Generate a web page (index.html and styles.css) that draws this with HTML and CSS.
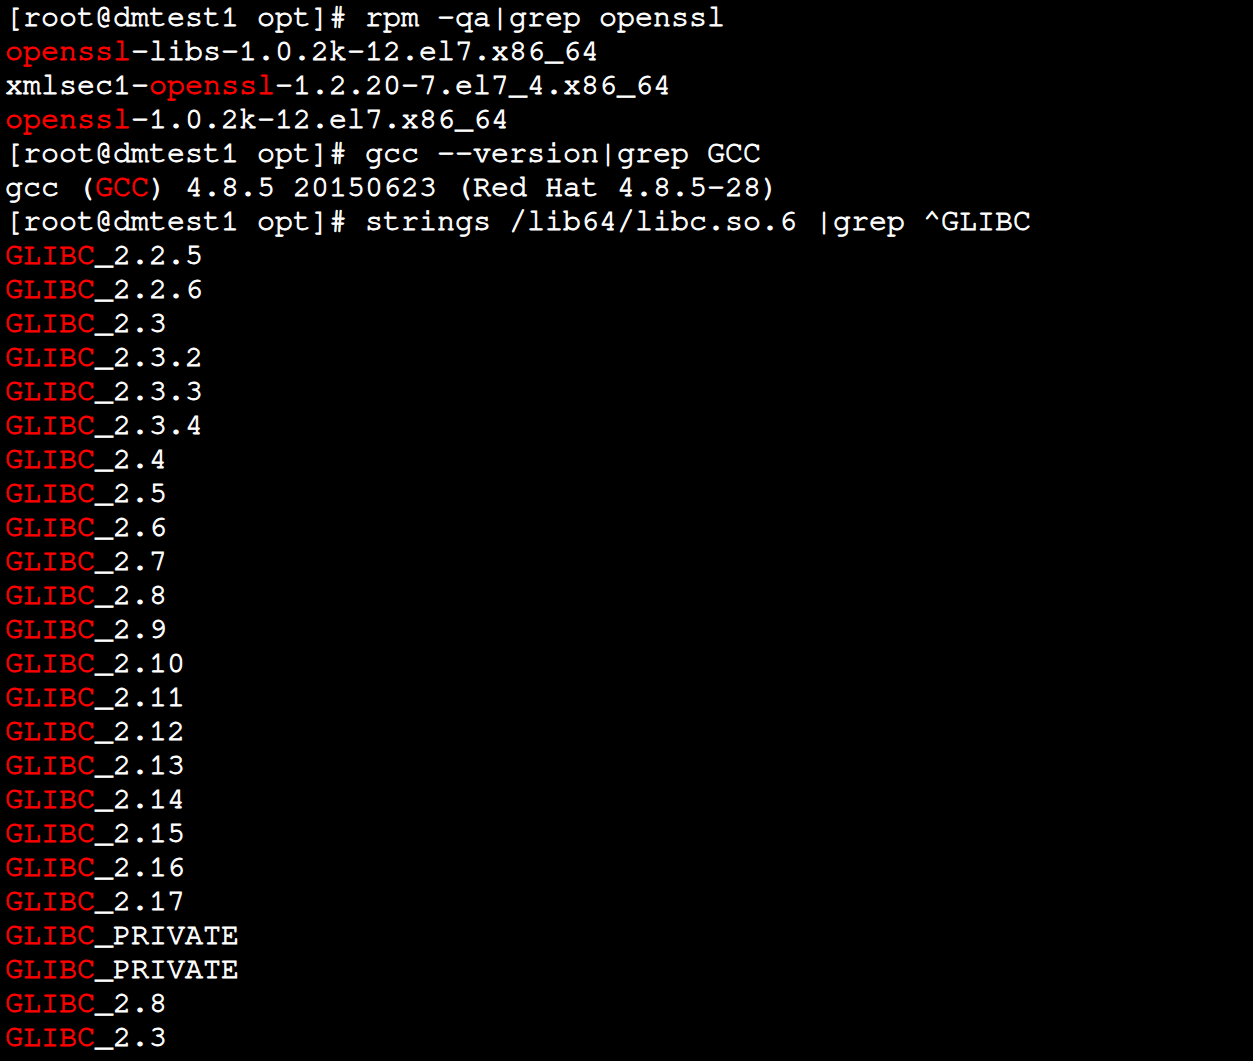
FILE: index.html
```html
<!DOCTYPE html>
<html>
<head>
<meta charset="utf-8">
<link rel="stylesheet" href="styles.css">
</head>
<body>
<pre class="term">[root@dmtest1 opt]# rpm -qa|grep openssl
<span class="hl">openssl</span>-libs-1.0.2k-12.el7.x86_64
xmlsec1-<span class="hl">openssl</span>-1.2.20-7.el7_4.x86_64
<span class="hl">openssl</span>-1.0.2k-12.el7.x86_64
[root@dmtest1 opt]# gcc --version|grep GCC
gcc (<span class="hl">GCC</span>) 4.8.5 20150623 (Red Hat 4.8.5-28)
[root@dmtest1 opt]# strings /lib64/libc.so.6 |grep ^GLIBC
<span class="hl">GLIBC</span>_2.2.5
<span class="hl">GLIBC</span>_2.2.6
<span class="hl">GLIBC</span>_2.3
<span class="hl">GLIBC</span>_2.3.2
<span class="hl">GLIBC</span>_2.3.3
<span class="hl">GLIBC</span>_2.3.4
<span class="hl">GLIBC</span>_2.4
<span class="hl">GLIBC</span>_2.5
<span class="hl">GLIBC</span>_2.6
<span class="hl">GLIBC</span>_2.7
<span class="hl">GLIBC</span>_2.8
<span class="hl">GLIBC</span>_2.9
<span class="hl">GLIBC</span>_2.10
<span class="hl">GLIBC</span>_2.11
<span class="hl">GLIBC</span>_2.12
<span class="hl">GLIBC</span>_2.13
<span class="hl">GLIBC</span>_2.14
<span class="hl">GLIBC</span>_2.15
<span class="hl">GLIBC</span>_2.16
<span class="hl">GLIBC</span>_2.17
<span class="hl">GLIBC</span>_PRIVATE
<span class="hl">GLIBC</span>_PRIVATE
<span class="hl">GLIBC</span>_2.8
<span class="hl">GLIBC</span>_2.3</pre>
</body>
</html>
```
FILE: styles.css
```css
html, body {
  margin: 0;
  padding: 0;
  background: #000;
  height: 100%;
  overflow: hidden;
}
.term {
  margin: 0;
  padding: 0 4px 0 5px;
  font-family: "Nimbus Mono PS", "FreeMono", "Courier 10 Pitch", "Liberation Mono", monospace;
  font-size: 30px;
  font-weight: normal;
  -webkit-text-stroke: 0.9px currentColor;
  line-height: 34px;
  color: #ffffff;
  white-space: pre;
}
.hl {
  color: #ff0000;
}
```
